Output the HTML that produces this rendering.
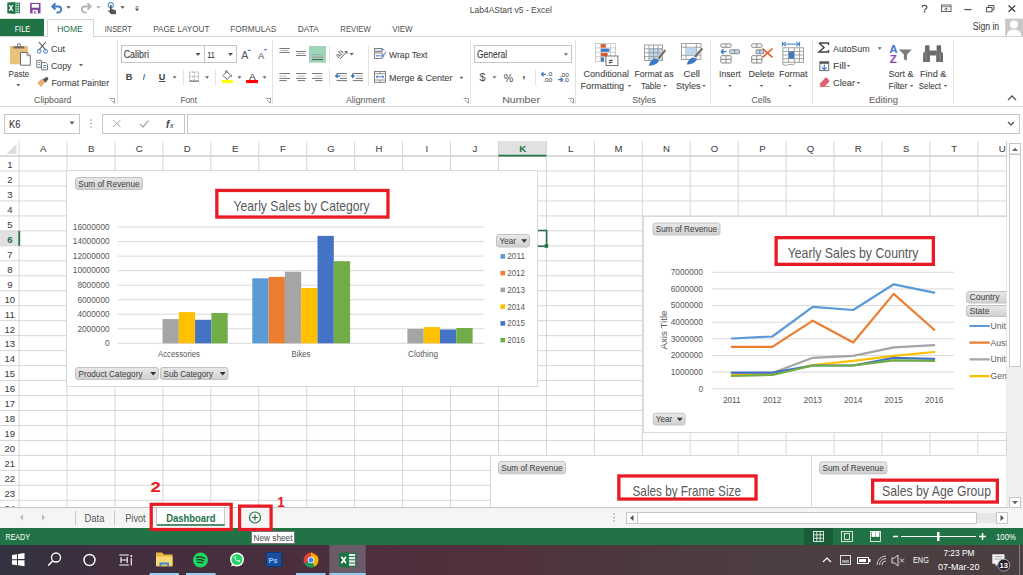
<!DOCTYPE html>
<html><head><meta charset="utf-8"><style>
html,body{margin:0;padding:0;width:1023px;height:575px;overflow:hidden;background:#fff}
svg{display:block}
text{font-family:"Liberation Sans", sans-serif}
</style></head><body>
<svg width="1023" height="575" viewBox="0 0 1023 575">
<rect x="0" y="0" width="1023" height="37" fill="#ffffff" />
<path d="M7.3,2.6 L15,2 L15,14 L7.3,13.2 Z" fill="#1e7145"/><rect x="15" y="3.1" width="4.6" height="9.7" fill="#dfeee5" stroke="#1e7145" stroke-width="0.9"/><path d="M15.5,5.4 h3.6 M15.5,7.8 h3.6 M15.5,10.2 h3.6 M17.2,3.3 v9.3" stroke="#1e7145" stroke-width="0.8"/><path d="M9.2,5 L12.8,10.8 M12.8,5 L9.2,10.8" stroke="#fff" stroke-width="1.3"/>
<rect x="30.1" y="2.9" width="10.4" height="10.5" fill="#8044a0"/><rect x="31.7" y="4" width="7.2" height="3.7" fill="#fff"/><rect x="32.6" y="9.9" width="5.2" height="3.5" fill="#fff"/><rect x="34.2" y="11" width="1.4" height="2.4" fill="#8044a0"/>
<path d="M55.5,3.3 L52.3,6.5 L55.5,9.7 M52.8,6.5 H58.2 a3,3 0 0 1 0,6 H56.5" fill="none" stroke="#3c78c3" stroke-width="1.9" stroke-linejoin="round"/>
<path d="M66.25,6.25 L70.75,6.25 L68.5,8.75 Z" fill="#555"/>
<path d="M87.5,3.3 L90.7,6.5 L87.5,9.7 M90.2,6.5 H84.8 a3,3 0 0 0 0,6 H86.5" fill="none" stroke="#b4b4b4" stroke-width="1.9" stroke-linejoin="round"/>
<path d="M96.25,6.25 L100.75,6.25 L98.5,8.75 Z" fill="#aaa"/>
<circle cx="110.8" cy="5.2" r="2.6" fill="none" stroke="#5b9bd5" stroke-width="1.1"/><path d="M110,5 h1.6 v4 l3.5,1 q0.9,0.3 0.9,1.2 v3 h-5 l-3,-3.5 l1,-0.8 l1,0.8 Z" fill="#555"/>
<path d="M120.25,6.25 L124.75,6.25 L122.5,8.75 Z" fill="#555"/>
<path d="M135.5,6.5 h3 M135.5,8 h3" stroke="#777" stroke-width="0.8"/>
<path d="M135.0,8.75 L139.0,8.75 L137,11.25 Z" fill="#555"/>
<text x="469.8" y="12.7" font-size="9.3" fill="#4a4a4a" textLength="82" lengthAdjust="spacingAndGlyphs" >Lab4AStart v5 - Excel</text>
<path d="M922.2,7.2 q0,-1.8 2.3,-1.8 q2.3,0 2.3,1.8 q0,1.2 -1.2,1.8 q-1,0.5 -1,1.6" fill="none" stroke="#555" stroke-width="1.3"/><rect x="923.8" y="11" width="1.5" height="1.4" fill="#555"/>
<rect x="941.5" y="5" width="9.5" height="6.5" fill="none" stroke="#666" stroke-width="1"/><path d="M941.5,6.7 h9.5" stroke="#666" stroke-width="0.8"/><path d="M944.2,9.8 L946.2,7.8 L948.2,9.8 M946.2,8 v3.5" fill="none" stroke="#666" stroke-width="0.9"/>
<line x1="964.3" y1="9.6" x2="971.5" y2="9.6" stroke="#555" stroke-width="1.3" />
<rect x="986.5" y="7.5" width="5.5" height="4.3" fill="none" stroke="#555"/><path d="M988.5,7.5 v-2 h5.5 v4.3 h-2" fill="none" stroke="#555"/>
<path d="M1008.5,5.5 L1015.2,11.8 M1015.2,5.5 L1008.5,11.8" stroke="#444" stroke-width="1.3"/>
<text x="972.7" y="30.2" font-size="10" fill="#444" stroke="#444" stroke-width="0.08" textLength="26.5" lengthAdjust="spacingAndGlyphs" >Sign in</text>
<rect x="1005.2" y="18.6" width="17.8" height="17.4" fill="#c8c8c8"/><circle cx="1014" cy="24.5" r="4" fill="#fff"/><path d="M1006.7,36 q0,-6.5 7.3,-6.5 q7.3,0 7.3,6.5 Z" fill="#fff"/>
<rect x="0" y="18.8" width="44" height="18.5" fill="#217346" />
<text x="14.7" y="31.6" font-size="9.7" fill="#ffffff" textLength="15.3" lengthAdjust="spacingAndGlyphs" >FILE</text>
<path d="M47.5,37 V19.5 H93.5 V37" fill="#fff" stroke="#d4d4d4" stroke-width="1"/>
<line x1="0" y1="36.5" x2="47.5" y2="36.5" stroke="#d4d4d4" stroke-width="1" />
<line x1="93.5" y1="36.5" x2="1023" y2="36.5" stroke="#d4d4d4" stroke-width="1" />
<text x="57.2" y="31.6" font-size="9.7" fill="#217346" textLength="25.6" lengthAdjust="spacingAndGlyphs" >HOME</text>
<text x="104.8" y="31.6" font-size="9.7" fill="#505050" textLength="26.9" lengthAdjust="spacingAndGlyphs" >INSERT</text>
<text x="153.2" y="31.6" font-size="9.7" fill="#505050" textLength="56.3" lengthAdjust="spacingAndGlyphs" >PAGE LAYOUT</text>
<text x="230.3" y="31.6" font-size="9.7" fill="#505050" textLength="46.1" lengthAdjust="spacingAndGlyphs" >FORMULAS</text>
<text x="297.8" y="31.6" font-size="9.7" fill="#505050" textLength="21.1" lengthAdjust="spacingAndGlyphs" >DATA</text>
<text x="340.3" y="31.6" font-size="9.7" fill="#505050" textLength="30.5" lengthAdjust="spacingAndGlyphs" >REVIEW</text>
<text x="392.2" y="31.6" font-size="9.7" fill="#505050" textLength="20.5" lengthAdjust="spacingAndGlyphs" >VIEW</text>
<rect x="0" y="37" width="1023" height="69" fill="#ffffff" />
<line x1="0" y1="106.5" x2="1023" y2="106.5" stroke="#d4d4d4" stroke-width="1" />
<line x1="117.5" y1="40" x2="117.5" y2="104" stroke="#e1e1e1" stroke-width="1" />
<line x1="272.5" y1="40" x2="272.5" y2="104" stroke="#e1e1e1" stroke-width="1" />
<line x1="470.5" y1="40" x2="470.5" y2="104" stroke="#e1e1e1" stroke-width="1" />
<line x1="575.5" y1="40" x2="575.5" y2="104" stroke="#e1e1e1" stroke-width="1" />
<line x1="710.5" y1="40" x2="710.5" y2="104" stroke="#e1e1e1" stroke-width="1" />
<line x1="812.5" y1="40" x2="812.5" y2="104" stroke="#e1e1e1" stroke-width="1" />
<line x1="953.5" y1="40" x2="953.5" y2="104" stroke="#e1e1e1" stroke-width="1" />
<text x="34.1" y="103" font-size="9.5" fill="#666" stroke="#666" stroke-width="0.08" textLength="37.3" lengthAdjust="spacingAndGlyphs" >Clipboard</text>
<text x="180.5" y="103" font-size="9.5" fill="#666" stroke="#666" stroke-width="0.08" textLength="16.5" lengthAdjust="spacingAndGlyphs" >Font</text>
<text x="346" y="103" font-size="9.5" fill="#666" stroke="#666" stroke-width="0.08" textLength="39" lengthAdjust="spacingAndGlyphs" >Alignment</text>
<text x="502.2" y="103" font-size="9.5" fill="#666" stroke="#666" stroke-width="0.08" textLength="37.8" lengthAdjust="spacingAndGlyphs" >Number</text>
<text x="632.2" y="103" font-size="9.5" fill="#666" stroke="#666" stroke-width="0.08" textLength="23.8" lengthAdjust="spacingAndGlyphs" >Styles</text>
<text x="751.5" y="103" font-size="9.5" fill="#666" stroke="#666" stroke-width="0.08" textLength="19.5" lengthAdjust="spacingAndGlyphs" >Cells</text>
<text x="869" y="103" font-size="9.5" fill="#666" stroke="#666" stroke-width="0.08" textLength="29" lengthAdjust="spacingAndGlyphs" >Editing</text>
<path d="M109.5,98.5 h5 v5 M111,100 l3,3" fill="none" stroke="#888" stroke-width="0.8"/>
<path d="M265.5,98.5 h5 v5 M267,100 l3,3" fill="none" stroke="#888" stroke-width="0.8"/>
<path d="M463.5,98.5 h5 v5 M465,100 l3,3" fill="none" stroke="#888" stroke-width="0.8"/>
<path d="M568.5,98.5 h5 v5 M570,100 l3,3" fill="none" stroke="#888" stroke-width="0.8"/>
<path d="M1008,100 L1012,96 L1016,100" fill="none" stroke="#555" stroke-width="1.3"/>
<rect x="9.9" y="46" width="18.1" height="18.3" fill="#e8c27a"/><rect x="13.5" y="46.3" width="10.8" height="2.2" fill="#6d6d6d"/><circle cx="18.9" cy="45.3" r="1.6" fill="none" stroke="#6d6d6d" stroke-width="1"/><path d="M20.5,52.4 h6.5 l3.3,3.3 v9.5 h-9.8 Z" fill="#fff" stroke="#6d6d6d" stroke-width="1"/><path d="M27,52.4 v3.3 h3.3" fill="none" stroke="#6d6d6d" stroke-width="0.8"/>
<text x="8.5" y="76.8" font-size="9.4" fill="#444" stroke="#444" stroke-width="0.08" textLength="20.7" lengthAdjust="spacingAndGlyphs" >Paste</text>
<path d="M16.3,84.05 L20.3,84.05 L18.3,86.55 Z" fill="#666"/>
<path d="M38.8,42 L45.8,50.2 M45.8,42 L38.8,50.2" stroke="#555" stroke-width="1.1"/><circle cx="39.2" cy="51.3" r="1.9" fill="none" stroke="#3c78c3" stroke-width="1"/><circle cx="45.6" cy="51.3" r="1.9" fill="none" stroke="#3c78c3" stroke-width="1"/>
<text x="51" y="51.7" font-size="9.4" fill="#444" stroke="#444" stroke-width="0.08" textLength="14" lengthAdjust="spacingAndGlyphs" >Cut</text>
<path d="M36.8,60.3 h4.5 v7 h-4.5 Z" fill="#fff" stroke="#666" stroke-width="0.9"/><path d="M38,62.5 h2 M38,64.5 h2" stroke="#3c78c3" stroke-width="0.8"/><path d="M41.5,62.5 h4 l2,2 v5.3 h-6 Z" fill="#fff" stroke="#666" stroke-width="0.9"/><path d="M43,65.5 h3.2 M43,67.5 h3.2" stroke="#3c78c3" stroke-width="0.8"/>
<text x="51" y="68.8" font-size="9.4" fill="#444" stroke="#444" stroke-width="0.08" textLength="20.4" lengthAdjust="spacingAndGlyphs" >Copy</text>
<path d="M79.0,64.05 L83.0,64.05 L81,66.55 Z" fill="#666"/>
<path d="M37.2,83 l4.8,-4.2 l3.3,3.3 l-4.2,4.8 Z" fill="#e8b070"/><path d="M42.6,79.6 l4.2,-2.8 l1.8,1.8 l-2.8,4.2 Z" fill="#555"/>
<text x="51.5" y="85.5" font-size="9.4" fill="#444" stroke="#444" stroke-width="0.08" textLength="57.6" lengthAdjust="spacingAndGlyphs" >Format Painter</text>
<rect x="121.5" y="45.5" width="115" height="17" fill="#fff" stroke="#c6c6c6" stroke-width="1" />
<line x1="204.5" y1="46" x2="204.5" y2="62" stroke="#c6c6c6" stroke-width="1" />
<text x="123.7" y="57.8" font-size="10" fill="#333" stroke="#333" stroke-width="0.08" textLength="25.2" lengthAdjust="spacingAndGlyphs" >Calibri</text>
<path d="M195.5,53.1 L200.5,53.1 L198,55.9 Z" fill="#555"/>
<text x="207.3" y="58" font-size="9.6" fill="#333" stroke="#333" stroke-width="0.08" textLength="7.6" lengthAdjust="spacingAndGlyphs" >11</text>
<path d="M228.0,53.1 L233.0,53.1 L230.5,55.9 Z" fill="#555"/>
<text x="241.2" y="58.5" font-size="10.2" fill="#555" stroke="#555" stroke-width="0.08" textLength="7" lengthAdjust="spacingAndGlyphs" >A</text>
<path d="M247.5,51 l1.7,-1.8 l1.7,1.8 Z" fill="#3c78c3"/>
<text x="258.3" y="58.5" font-size="8.5" fill="#555" stroke="#555" stroke-width="0.08" textLength="6" lengthAdjust="spacingAndGlyphs" >A</text>
<path d="M263.8,49 l1.7,1.8 l1.7,-1.8 Z" fill="#3c78c3"/>
<text x="125.7" y="80.2" font-size="9.3" fill="#444" stroke="#444" stroke-width="0.08" font-weight="bold" >B</text>
<text x="142.5" y="80.2" font-size="9.5" fill="#555" stroke="#555" stroke-width="0.08" font-style="italic" font-family="Liberation Serif">I</text>
<text x="158.8" y="80.2" font-size="9.0" fill="#444" stroke="#444" stroke-width="0.08" font-weight="bold" >U</text>
<line x1="158.9" y1="81.5" x2="165.4" y2="81.5" stroke="#444" stroke-width="1" />
<path d="M172.6,76.15 L176.6,76.15 L174.6,78.65 Z" fill="#666"/>
<line x1="183.5" y1="69" x2="183.5" y2="85" stroke="#e1e1e1" stroke-width="1" />
<g stroke="#888" stroke-width="0.9" stroke-dasharray="1.2,1.2" fill="none"><rect x="189.7" y="72" width="8.8" height="8.8"/><path d="M194.1,72 v8.8 M189.7,76.4 h8.8"/></g><line x1="189.2" y1="81.2" x2="198.9" y2="81.2" stroke="#666" stroke-width="1"/>
<path d="M205.0,76.15 L209.0,76.15 L207,78.65 Z" fill="#666"/>
<line x1="215.5" y1="69" x2="215.5" y2="85" stroke="#e1e1e1" stroke-width="1" />
<path d="M223,75.5 l3.8,-3.8 l4,4 l-3.8,3.8 Z" fill="#fff" stroke="#555" stroke-width="0.9"/><path d="M225.5,73 v-2 q1.5,-1 2.5,0.5" fill="none" stroke="#555" stroke-width="0.8"/><path d="M231,74.5 q1.8,1 0.8,3 q-1,-1 -0.8,-3 Z" fill="#3c78c3"/><rect x="221.9" y="80" width="11.1" height="3.1" fill="#ffff00"/>
<path d="M237.4,76.15 L241.4,76.15 L239.4,78.65 Z" fill="#666"/>
<text x="249" y="79.6" font-size="9.2" fill="#444" stroke="#444" stroke-width="0.08" textLength="6.8" lengthAdjust="spacingAndGlyphs" >A</text>
<rect x="246.1" y="80" width="11.9" height="3.1" fill="#ff0000" />
<path d="M262.6,76.15 L266.6,76.15 L264.6,78.65 Z" fill="#666"/>
<line x1="279.4" y1="48.5" x2="289.6" y2="48.5" stroke="#777" stroke-width="1" />
<line x1="280.5" y1="50.5" x2="288.5" y2="50.5" stroke="#aaa" stroke-width="1" />
<line x1="279.4" y1="52.5" x2="289.6" y2="52.5" stroke="#777" stroke-width="1" />
<line x1="296" y1="51.5" x2="306" y2="51.5" stroke="#777" stroke-width="1" />
<line x1="297" y1="53.5" x2="305" y2="53.5" stroke="#aaa" stroke-width="1" />
<line x1="296" y1="55.5" x2="306" y2="55.5" stroke="#777" stroke-width="1" />
<rect x="309" y="46" width="17" height="16.7" fill="#9fd5b7" />
<line x1="312" y1="54.7" x2="323" y2="54.7" stroke="#9ab" stroke-width="1" />
<line x1="312" y1="57.2" x2="323" y2="57.2" stroke="#a88" stroke-width="1" />
<line x1="312" y1="59.6" x2="323" y2="59.6" stroke="#555" stroke-width="1" />
<line x1="329.5" y1="46" x2="329.5" y2="61.5" stroke="#e1e1e1" stroke-width="1" />
<text x="0" y="0" font-size="7.5" fill="#555" transform="translate(338,58.5) rotate(-45)">ab</text><path d="M340,59 L347,51.5 M344.5,51.5 h2.5 v2.5" fill="none" stroke="#555" stroke-width="0.9"/>
<path d="M349.45,52.95 L353.95,52.95 L351.7,55.45 Z" fill="#666"/>
<line x1="368.5" y1="45" x2="368.5" y2="86" stroke="#e1e1e1" stroke-width="1" />
<line x1="279.4" y1="73.5" x2="289.9" y2="73.5" stroke="#777" stroke-width="1" />
<line x1="279.4" y1="78.4" x2="289.9" y2="78.4" stroke="#777" stroke-width="1" />
<line x1="279.4" y1="76" x2="286.7" y2="76" stroke="#bbb" stroke-width="1" />
<line x1="279.4" y1="80.6" x2="286.7" y2="80.6" stroke="#777" stroke-width="1" />
<line x1="296" y1="73.5" x2="306.5" y2="73.5" stroke="#777" stroke-width="1" />
<line x1="296" y1="78.4" x2="306.5" y2="78.4" stroke="#777" stroke-width="1" />
<line x1="297.5" y1="76" x2="305" y2="76" stroke="#bbb" stroke-width="1" />
<line x1="297.5" y1="80.6" x2="305" y2="80.6" stroke="#777" stroke-width="1" />
<line x1="312" y1="73.5" x2="322.5" y2="73.5" stroke="#777" stroke-width="1" />
<line x1="312" y1="78.4" x2="322.5" y2="78.4" stroke="#777" stroke-width="1" />
<line x1="315.2" y1="76" x2="322.5" y2="76" stroke="#bbb" stroke-width="1" />
<line x1="315.2" y1="80.6" x2="322.5" y2="80.6" stroke="#777" stroke-width="1" />
<line x1="329.5" y1="69" x2="329.5" y2="85" stroke="#e1e1e1" stroke-width="1" />
<path d="M334.6,76 l3,-2.5 v5 Z" fill="#2e75b6"/><path d="M337,76 h3" stroke="#2e75b6" stroke-width="1.4"/>
<line x1="336.5" y1="73.5" x2="347" y2="73.5" stroke="#777" stroke-width="1" />
<line x1="340" y1="76" x2="347" y2="76" stroke="#bbb" stroke-width="1" />
<line x1="340" y1="78.4" x2="347" y2="78.4" stroke="#777" stroke-width="1" />
<line x1="336.5" y1="80.6" x2="347" y2="80.6" stroke="#777" stroke-width="1" />
<path d="M355,76 l-3,-2.5 v5 Z" fill="#2e75b6"/><path d="M350.8,76 h3" stroke="#2e75b6" stroke-width="1.4"/>
<line x1="352.7" y1="73.5" x2="363" y2="73.5" stroke="#777" stroke-width="1" />
<line x1="356" y1="76" x2="363" y2="76" stroke="#bbb" stroke-width="1" />
<line x1="356" y1="78.4" x2="363" y2="78.4" stroke="#777" stroke-width="1" />
<line x1="352.7" y1="80.6" x2="363" y2="80.6" stroke="#777" stroke-width="1" />
<rect x="374.5" y="48.5" width="7.5" height="3" fill="#dbe8f5" stroke="#777" stroke-width="0.9"/><rect x="374.5" y="53" width="7.5" height="5.5" fill="#fff" stroke="#777" stroke-width="0.9"/><path d="M376,55.8 h4.5" stroke="#3c78c3"/><path d="M381.5,49.8 h3 M385.5,51.5 q0,3.5 -3,4.5 M381.8,56 l2,-1.8 M381.8,56 l2.2,1.2" fill="none" stroke="#3c78c3" stroke-width="0.9"/>
<text x="389" y="58" font-size="9.4" fill="#444" stroke="#444" stroke-width="0.08" textLength="38.5" lengthAdjust="spacingAndGlyphs" >Wrap Text</text>
<rect x="374.5" y="71.5" width="11" height="10.8" fill="#fff" stroke="#777" stroke-width="0.9"/><path d="M374.5,73.7 h11 M374.5,80 h11 M380,71.5 v2.2 M380,80 v2.3" stroke="#777" stroke-width="0.8"/><path d="M376.2,76.8 h7.6 M376.2,76.8 l1.6,-1.3 M376.2,76.8 l1.6,1.3 M383.8,76.8 l-1.6,-1.3 M383.8,76.8 l-1.6,1.3" fill="none" stroke="#3c78c3" stroke-width="0.9"/>
<text x="389" y="81" font-size="9.4" fill="#444" stroke="#444" stroke-width="0.08" textLength="63.5" lengthAdjust="spacingAndGlyphs" >Merge &amp; Center</text>
<path d="M459.5,76.75 L463.5,76.75 L461.5,79.25 Z" fill="#666"/>
<rect x="474.5" y="45.5" width="97" height="17" fill="#fff" stroke="#c6c6c6" stroke-width="1" />
<text x="477" y="58" font-size="10" fill="#333" stroke="#333" stroke-width="0.08" textLength="30" lengthAdjust="spacingAndGlyphs" >General</text>
<path d="M564.0,53.25 L568.0,53.25 L566,55.75 Z" fill="#666"/>
<text x="479.6" y="81.2" font-size="11" fill="#555" stroke="#555" stroke-width="0.08" textLength="6" lengthAdjust="spacingAndGlyphs" >$</text>
<path d="M492.5,76.25 L496.5,76.25 L494.5,78.75 Z" fill="#777"/>
<text x="503.7" y="81.6" font-size="10.5" fill="#555" stroke="#555" stroke-width="0.08" textLength="9.4" lengthAdjust="spacingAndGlyphs" >%</text>
<text x="522.2" y="78.4" font-size="11" fill="#555" stroke="#555" stroke-width="0.08" font-weight="bold" >,</text>
<line x1="535.5" y1="69" x2="535.5" y2="85" stroke="#e1e1e1" stroke-width="1" />
<path d="M541.3,74.3 h4.5 M541.3,74.3 l2.2,-2 M541.3,74.3 l2.2,2" stroke="#3c78c3" stroke-width="1.3" fill="none"/>
<text x="546.5" y="76" font-size="6.2" fill="#555" stroke="#555" stroke-width="0.08" textLength="5.7" lengthAdjust="spacingAndGlyphs" >.0</text>
<text x="543.3" y="81.6" font-size="6.2" fill="#555" stroke="#555" stroke-width="0.08" textLength="8.9" lengthAdjust="spacingAndGlyphs" >.00</text>
<text x="559.8" y="76.8" font-size="6.2" fill="#555" stroke="#555" stroke-width="0.08" textLength="9" lengthAdjust="spacingAndGlyphs" >.00</text>
<path d="M558,79.7 h4.8 M562.8,79.7 l-2.2,-2 M562.8,79.7 l-2.2,2" stroke="#3c78c3" stroke-width="1.3" fill="none"/>
<text x="563" y="81.6" font-size="6.2" fill="#555" stroke="#555" stroke-width="0.08" textLength="5.8" lengthAdjust="spacingAndGlyphs" >.0</text>
<g stroke="#c8c8c8" stroke-width="0.9" fill="none"><rect x="595.5" y="43.5" width="20" height="18" fill="#fff"/><path d="M600.5,43.5 v18 M605.5,43.5 v18 M610.5,43.5 v18 M595.5,47.9 h20 M595.5,52.3 h20 M595.5,56.7 h20"/></g><rect x="601" y="44.1" width="4.8" height="3.5" fill="#e0592a"/><rect x="601" y="48.6" width="8.4" height="3.2" fill="#3c78c3"/><rect x="601" y="52.9" width="6.6" height="3.5" fill="#e0592a"/><rect x="601" y="57.4" width="3" height="4.2" fill="#3c78c3"/><rect x="606" y="56" width="11.9" height="9.6" fill="#fff" stroke="#666" stroke-width="0.9"/><text x="608.6" y="63.6" font-size="8" fill="#333">≠</text>
<text x="583.5" y="76.9" font-size="9.4" fill="#444" stroke="#444" stroke-width="0.08" textLength="45.5" lengthAdjust="spacingAndGlyphs" >Conditional</text>
<text x="580.5" y="88.8" font-size="9.4" fill="#444" stroke="#444" stroke-width="0.08" textLength="43.6" lengthAdjust="spacingAndGlyphs" >Formatting</text>
<path d="M627.75,85.0 L631.25,85.0 L629.5,87.0 Z" fill="#666"/>
<rect x="649" y="48.5" width="13" height="11.5" fill="#bdd7ee"/><g stroke="#999" stroke-width="0.9" fill="none"><rect x="644.5" y="45" width="18" height="15.5"/><path d="M649,45 v15.5 M653.5,45 v15.5 M658,45 v15.5 M644.5,48.8 h18 M644.5,52.7 h18 M644.5,56.6 h18"/></g><path d="M657,58 L664.5,49 L666.3,50.8 L659.5,59.8 Z" fill="#6d6d6d" stroke="#fff" stroke-width="0.6"/><path d="M648.7,65.8 Q650,60.5 654.5,58.6 Q658.5,58.6 658.8,61.5 Q655,65.8 648.7,65.8 Z" fill="#3c78c3"/>
<text x="634.5" y="76.9" font-size="9.4" fill="#444" stroke="#444" stroke-width="0.08" textLength="39" lengthAdjust="spacingAndGlyphs" >Format as</text>
<text x="641" y="88.8" font-size="9.4" fill="#444" stroke="#444" stroke-width="0.08" textLength="20" lengthAdjust="spacingAndGlyphs" >Table</text>
<path d="M663.25,85.0 L666.75,85.0 L665,87.0 Z" fill="#666"/>
<g stroke="#999" stroke-width="0.9" fill="none"><rect x="681.5" y="43.5" width="19.4" height="16" fill="#fff"/><path d="M686,43.5 v16 M696.3,43.5 v16 M681.5,47.3 h19.4 M681.5,55.3 h19.4"/></g><rect x="686.4" y="47.6" width="9.6" height="7.4" fill="#bdd7ee"/><path d="M693.5,56.3 L701.5,47.3 L703.4,49.1 L696,58 Z" fill="#6d6d6d" stroke="#fff" stroke-width="0.6"/><path d="M686.8,64.6 Q688,59.5 692.3,57.4 Q696.3,57.4 696.6,60.2 Q693,64.6 686.8,64.6 Z" fill="#3c78c3"/>
<text x="683.5" y="76.9" font-size="9.4" fill="#444" stroke="#444" stroke-width="0.08" textLength="16.5" lengthAdjust="spacingAndGlyphs" >Cell</text>
<text x="676" y="88.8" font-size="9.4" fill="#444" stroke="#444" stroke-width="0.08" textLength="24.5" lengthAdjust="spacingAndGlyphs" >Styles</text>
<path d="M702.25,85.0 L705.75,85.0 L704,87.0 Z" fill="#666"/>
<rect x="720.9" y="43.9" width="10.200000000000045" height="3.3999999999999986" rx="0.8" fill="#fff" stroke="#888" stroke-width="1"/><line x1="726.0" y1="43.9" x2="726.0" y2="47.3" stroke="#888"/><rect x="729.7" y="49.8" width="9.699999999999932" height="3.9000000000000057" rx="0.8" fill="#bdd7ee" stroke="#888" stroke-width="1"/><line x1="734.55" y1="49.8" x2="734.55" y2="53.7" stroke="#888"/><rect x="720.9" y="55.7" width="10.200000000000045" height="7.299999999999997" rx="0.8" fill="#fff" stroke="#888" stroke-width="1"/><path d="M726.0,55.7 V63 M720.9,59.35 H731.1" stroke="#888"/><path d="M721,51.6 h5.5 M721,51.6 l2.6,-2.4 M721,51.6 l2.6,2.4" fill="none" stroke="#3c78c3" stroke-width="1.4"/>
<text x="719" y="76.9" font-size="9.4" fill="#444" stroke="#444" stroke-width="0.08" textLength="21.7" lengthAdjust="spacingAndGlyphs" >Insert</text>
<path d="M728.25,85.0 L731.75,85.0 L730,87.0 Z" fill="#666"/>
<rect x="751.7" y="43.9" width="10.199999999999932" height="3.3999999999999986" rx="0.8" fill="#fff" stroke="#888" stroke-width="1"/><line x1="756.8" y1="43.9" x2="756.8" y2="47.3" stroke="#888"/><rect x="756" y="49.8" width="7.5" height="3.9000000000000057" rx="0.8" fill="#bdd7ee" stroke="#888" stroke-width="1"/><line x1="759.75" y1="49.8" x2="759.75" y2="53.7" stroke="#888"/><rect x="751.7" y="55.7" width="10.199999999999932" height="7.299999999999997" rx="0.8" fill="#fff" stroke="#888" stroke-width="1"/><path d="M756.8,55.7 V63 M751.7,59.35 H761.9" stroke="#888"/><path d="M762.6,48.5 L772.5,57.4 M772.5,48.5 L762.6,57.4" stroke="#e0592a" stroke-width="1.6"/>
<text x="748.5" y="76.9" font-size="9.4" fill="#444" stroke="#444" stroke-width="0.08" textLength="26" lengthAdjust="spacingAndGlyphs" >Delete</text>
<path d="M759.75,85.0 L763.25,85.0 L761.5,87.0 Z" fill="#666"/>
<path d="M783,44.1 h16 M783,44.1 l3,-2.2 M783,44.1 l3,2.2 M799,44.1 l-3,-2.2 M799,44.1 l-3,2.2 M782.4,42 v4.5 M799.6,42 v4.5" stroke="#3c78c3" fill="none" stroke-width="1"/><g stroke="#999" stroke-width="0.9" fill="none"><rect x="782.9" y="47.8" width="20.6" height="14.5" fill="#fff"/><path d="M788.5,47.8 v14.5 M794.3,47.8 v14.5 M799.5,47.8 v14.5 M782.9,51.4 h20.6 M782.9,55 h20.6 M782.9,58.7 h20.6"/><path d="M782.9,62.3 v2.5 q4,1.5 6,-0.5 q4,1.5 6,-0.5 v-2"/></g><rect x="788.8" y="51.5" width="5.2" height="7.1" fill="#3c78c3"/>
<text x="779" y="76.9" font-size="9.4" fill="#444" stroke="#444" stroke-width="0.08" textLength="28.6" lengthAdjust="spacingAndGlyphs" >Format</text>
<path d="M788.25,85.0 L791.75,85.0 L790,87.0 Z" fill="#666"/>
<path d="M819,43 h9.5 v2 M819,43 l5,4.5 l-5,4.5 h9.5 v-2" fill="none" stroke="#444" stroke-width="1.5"/>
<text x="833" y="52" font-size="9.4" fill="#444" stroke="#444" stroke-width="0.08" textLength="36.7" lengthAdjust="spacingAndGlyphs" >AutoSum</text>
<path d="M877.7,47.25 L881.7,47.25 L879.7,49.75 Z" fill="#666"/>
<rect x="819.9" y="61.8" width="8.8" height="8.8" fill="#fff" stroke="#666"/><rect x="819.9" y="61.8" width="8.8" height="2" fill="#555"/><path d="M824.3,64.5 v5 M822,67.3 l2.3,2.3 l2.3,-2.3" stroke="#3c78c3" fill="none" stroke-width="1.1"/>
<text x="833" y="68.7" font-size="9.4" fill="#444" stroke="#444" stroke-width="0.08" textLength="13" lengthAdjust="spacingAndGlyphs" >Fill</text>
<path d="M846.75,65.0 L850.25,65.0 L848.5,67.0 Z" fill="#666"/>
<path d="M819.5,84 l5.5,-6 q1,-1 2,0 l2,2 q1,1 0,2 l-4.5,4.5 h-3.5 Z" fill="#e06070"/><path d="M819.5,86.5 h10" stroke="#e06070" stroke-width="0.8"/>
<text x="833" y="85.8" font-size="9.4" fill="#444" stroke="#444" stroke-width="0.08" textLength="22" lengthAdjust="spacingAndGlyphs" >Clear</text>
<path d="M856.75,82.0 L860.25,82.0 L858.5,84.0 Z" fill="#666"/>
<text x="889.4" y="52.5" font-size="10.5" fill="#3c78c3" stroke="#3c78c3" stroke-width="0.08" font-weight="bold" textLength="8" lengthAdjust="spacingAndGlyphs" >A</text>
<text x="889.8" y="63.3" font-size="10.5" fill="#8e44ad" stroke="#8e44ad" stroke-width="0.08" font-weight="bold" textLength="7" lengthAdjust="spacingAndGlyphs" >Z</text>
<path d="M898.8,49.6 h13.1 l-5,5 v5.8 l-3,-1.2 v-4.6 Z" fill="#7a7a7a"/>
<text x="888.6" y="76.9" font-size="9.4" fill="#444" stroke="#444" stroke-width="0.08" textLength="25" lengthAdjust="spacingAndGlyphs" >Sort &amp;</text>
<text x="888.6" y="88.8" font-size="9.4" fill="#444" stroke="#444" stroke-width="0.08" textLength="18.8" lengthAdjust="spacingAndGlyphs" >Filter</text>
<path d="M909.95,85.0 L913.45,85.0 L911.7,87.0 Z" fill="#666"/>
<g fill="#6a6a6a"><rect x="925" y="45.2" width="4.5" height="7" rx="0.8"/><rect x="936.6" y="45.2" width="4.5" height="7" rx="0.8"/><path d="M923.1,61.9 v-8 q0,-2 2,-2.5 h4.8 v10.5 Z"/><path d="M943,61.9 v-8 q0,-2 -2,-2.5 h-4.8 v10.5 Z"/><rect x="929.5" y="50.5" width="7" height="5"/></g><path d="M926,52 v9 M940,52 v9" stroke="#999" stroke-width="0.8"/>
<text x="919.9" y="76.9" font-size="9.4" fill="#444" stroke="#444" stroke-width="0.08" textLength="26.6" lengthAdjust="spacingAndGlyphs" >Find &amp;</text>
<text x="918.7" y="88.8" font-size="9.4" fill="#444" stroke="#444" stroke-width="0.08" textLength="22.3" lengthAdjust="spacingAndGlyphs" >Select</text>
<path d="M943.75,85.0 L947.25,85.0 L945.5,87.0 Z" fill="#666"/>
<rect x="0" y="107" width="1023" height="34" fill="#ffffff" />
<rect x="4.5" y="114.5" width="75" height="19" fill="#fff" stroke="#c6c6c6" stroke-width="1" />
<text x="9.1" y="128" font-size="10" fill="#333" stroke="#333" stroke-width="0.08" textLength="11.3" lengthAdjust="spacingAndGlyphs" >K6</text>
<path d="M69.5,121.5 L74.5,121.5 L72,124.5 Z" fill="#555"/>
<circle cx="91" cy="120" r="0.7" fill="#888"/><circle cx="91" cy="123.5" r="0.7" fill="#888"/><circle cx="91" cy="127" r="0.7" fill="#888"/>
<rect x="102.5" y="114.5" width="82" height="19" fill="#fff" stroke="#c6c6c6" stroke-width="1" />
<path d="M113,120 l7.5,7 M120.5,120 l-7.5,7" stroke="#aaa" stroke-width="1"/>
<path d="M140,124 l3,3 l5.5,-6.5" fill="none" stroke="#aaa" stroke-width="1.2"/>
<text x="166" y="127.5" font-size="10" fill="#444" stroke="#444" stroke-width="0.08" font-style="italic" font-family="Liberation Serif" font-weight="bold">f</text>
<text x="170" y="128" font-size="7" fill="#444" stroke="#444" stroke-width="0.08" font-style="italic" font-family="Liberation Serif">x</text>
<rect x="187.5" y="114.5" width="832" height="19" fill="#fff" stroke="#c6c6c6" stroke-width="1" />
<path d="M1008,122 l3,3 l3,-3" fill="none" stroke="#555" stroke-width="1.3"/>
<rect x="0" y="141" width="1008" height="367" fill="#ffffff" />
<rect x="498.45" y="141" width="47.94" height="15.030000000000001" fill="#e1e1e1" />
<rect x="0" y="230.88" width="19.05" height="14.97" fill="#e1e1e1" />
<path d="M16.5,144 v10 h-10 Z" fill="#dcdcdc"/>
<line x1="19.05" y1="141" x2="19.05" y2="508" stroke="#d6d6d6" stroke-width="1" />
<line x1="66.99" y1="141" x2="66.99" y2="508" stroke="#d6d6d6" stroke-width="1" />
<line x1="114.93" y1="141" x2="114.93" y2="508" stroke="#d6d6d6" stroke-width="1" />
<line x1="162.87" y1="141" x2="162.87" y2="508" stroke="#d6d6d6" stroke-width="1" />
<line x1="210.81" y1="141" x2="210.81" y2="508" stroke="#d6d6d6" stroke-width="1" />
<line x1="258.75" y1="141" x2="258.75" y2="508" stroke="#d6d6d6" stroke-width="1" />
<line x1="306.69" y1="141" x2="306.69" y2="508" stroke="#d6d6d6" stroke-width="1" />
<line x1="354.63" y1="141" x2="354.63" y2="508" stroke="#d6d6d6" stroke-width="1" />
<line x1="402.57" y1="141" x2="402.57" y2="508" stroke="#d6d6d6" stroke-width="1" />
<line x1="450.51" y1="141" x2="450.51" y2="508" stroke="#d6d6d6" stroke-width="1" />
<line x1="498.45" y1="141" x2="498.45" y2="508" stroke="#d6d6d6" stroke-width="1" />
<line x1="546.39" y1="141" x2="546.39" y2="508" stroke="#d6d6d6" stroke-width="1" />
<line x1="594.33" y1="141" x2="594.33" y2="508" stroke="#d6d6d6" stroke-width="1" />
<line x1="642.27" y1="141" x2="642.27" y2="508" stroke="#d6d6d6" stroke-width="1" />
<line x1="690.21" y1="141" x2="690.21" y2="508" stroke="#d6d6d6" stroke-width="1" />
<line x1="738.15" y1="141" x2="738.15" y2="508" stroke="#d6d6d6" stroke-width="1" />
<line x1="786.09" y1="141" x2="786.09" y2="508" stroke="#d6d6d6" stroke-width="1" />
<line x1="834.03" y1="141" x2="834.03" y2="508" stroke="#d6d6d6" stroke-width="1" />
<line x1="881.97" y1="141" x2="881.97" y2="508" stroke="#d6d6d6" stroke-width="1" />
<line x1="929.91" y1="141" x2="929.91" y2="508" stroke="#d6d6d6" stroke-width="1" />
<line x1="977.85" y1="141" x2="977.85" y2="508" stroke="#d6d6d6" stroke-width="1" />
<line x1="0" y1="156.03" x2="1008" y2="156.03" stroke="#cfcfcf" stroke-width="1.5" />
<line x1="0" y1="171.0" x2="1008" y2="171.0" stroke="#d6d6d6" stroke-width="1" />
<line x1="0" y1="185.97" x2="1008" y2="185.97" stroke="#d6d6d6" stroke-width="1" />
<line x1="0" y1="200.94" x2="1008" y2="200.94" stroke="#d6d6d6" stroke-width="1" />
<line x1="0" y1="215.91" x2="1008" y2="215.91" stroke="#d6d6d6" stroke-width="1" />
<line x1="0" y1="230.88" x2="1008" y2="230.88" stroke="#d6d6d6" stroke-width="1" />
<line x1="0" y1="245.85" x2="1008" y2="245.85" stroke="#d6d6d6" stroke-width="1" />
<line x1="0" y1="260.82" x2="1008" y2="260.82" stroke="#d6d6d6" stroke-width="1" />
<line x1="0" y1="275.79" x2="1008" y2="275.79" stroke="#d6d6d6" stroke-width="1" />
<line x1="0" y1="290.76" x2="1008" y2="290.76" stroke="#d6d6d6" stroke-width="1" />
<line x1="0" y1="305.73" x2="1008" y2="305.73" stroke="#d6d6d6" stroke-width="1" />
<line x1="0" y1="320.7" x2="1008" y2="320.7" stroke="#d6d6d6" stroke-width="1" />
<line x1="0" y1="335.67" x2="1008" y2="335.67" stroke="#d6d6d6" stroke-width="1" />
<line x1="0" y1="350.64" x2="1008" y2="350.64" stroke="#d6d6d6" stroke-width="1" />
<line x1="0" y1="365.61" x2="1008" y2="365.61" stroke="#d6d6d6" stroke-width="1" />
<line x1="0" y1="380.58" x2="1008" y2="380.58" stroke="#d6d6d6" stroke-width="1" />
<line x1="0" y1="395.55" x2="1008" y2="395.55" stroke="#d6d6d6" stroke-width="1" />
<line x1="0" y1="410.52" x2="1008" y2="410.52" stroke="#d6d6d6" stroke-width="1" />
<line x1="0" y1="425.49" x2="1008" y2="425.49" stroke="#d6d6d6" stroke-width="1" />
<line x1="0" y1="440.46" x2="1008" y2="440.46" stroke="#d6d6d6" stroke-width="1" />
<line x1="0" y1="455.43" x2="1008" y2="455.43" stroke="#d6d6d6" stroke-width="1" />
<line x1="0" y1="470.4" x2="1008" y2="470.4" stroke="#d6d6d6" stroke-width="1" />
<line x1="0" y1="485.37" x2="1008" y2="485.37" stroke="#d6d6d6" stroke-width="1" />
<line x1="0" y1="500.34" x2="1008" y2="500.34" stroke="#d6d6d6" stroke-width="1" />
<line x1="498.45" y1="155.6" x2="546.3899999999999" y2="155.6" stroke="#217346" stroke-width="1.8" />
<line x1="19.25" y1="230.88" x2="19.25" y2="245.85000000000002" stroke="#217346" stroke-width="1.8" />
<text x="43.32" y="151.9" font-size="9.6" fill="#444" stroke="#444" stroke-width="0.08" text-anchor="middle" >A</text>
<text x="91.26" y="151.9" font-size="9.6" fill="#444" stroke="#444" stroke-width="0.08" text-anchor="middle" >B</text>
<text x="139.2" y="151.9" font-size="9.6" fill="#444" stroke="#444" stroke-width="0.08" text-anchor="middle" >C</text>
<text x="187.14" y="151.9" font-size="9.6" fill="#444" stroke="#444" stroke-width="0.08" text-anchor="middle" >D</text>
<text x="235.08" y="151.9" font-size="9.6" fill="#444" stroke="#444" stroke-width="0.08" text-anchor="middle" >E</text>
<text x="283.02" y="151.9" font-size="9.6" fill="#444" stroke="#444" stroke-width="0.08" text-anchor="middle" >F</text>
<text x="330.96" y="151.9" font-size="9.6" fill="#444" stroke="#444" stroke-width="0.08" text-anchor="middle" >G</text>
<text x="378.9" y="151.9" font-size="9.6" fill="#444" stroke="#444" stroke-width="0.08" text-anchor="middle" >H</text>
<text x="426.84" y="151.9" font-size="9.6" fill="#444" stroke="#444" stroke-width="0.08" text-anchor="middle" >I</text>
<text x="474.78" y="151.9" font-size="9.6" fill="#444" stroke="#444" stroke-width="0.08" text-anchor="middle" >J</text>
<text x="522.72" y="151.9" font-size="9.6" fill="#217346" stroke="#217346" stroke-width="0.08" text-anchor="middle" font-weight="bold" >K</text>
<text x="570.66" y="151.9" font-size="9.6" fill="#444" stroke="#444" stroke-width="0.08" text-anchor="middle" >L</text>
<text x="618.6" y="151.9" font-size="9.6" fill="#444" stroke="#444" stroke-width="0.08" text-anchor="middle" >M</text>
<text x="666.54" y="151.9" font-size="9.6" fill="#444" stroke="#444" stroke-width="0.08" text-anchor="middle" >N</text>
<text x="714.48" y="151.9" font-size="9.6" fill="#444" stroke="#444" stroke-width="0.08" text-anchor="middle" >O</text>
<text x="762.42" y="151.9" font-size="9.6" fill="#444" stroke="#444" stroke-width="0.08" text-anchor="middle" >P</text>
<text x="810.36" y="151.9" font-size="9.6" fill="#444" stroke="#444" stroke-width="0.08" text-anchor="middle" >Q</text>
<text x="858.3" y="151.9" font-size="9.6" fill="#444" stroke="#444" stroke-width="0.08" text-anchor="middle" >R</text>
<text x="906.24" y="151.9" font-size="9.6" fill="#444" stroke="#444" stroke-width="0.08" text-anchor="middle" >S</text>
<text x="954.18" y="151.9" font-size="9.6" fill="#444" stroke="#444" stroke-width="0.08" text-anchor="middle" >T</text>
<text x="1002.12" y="151.9" font-size="9.6" fill="#444" stroke="#444" stroke-width="0.08" text-anchor="middle" >U</text>
<text x="9.8" y="167.83" font-size="9.5" fill="#444" stroke="#444" stroke-width="0.08" text-anchor="middle" >1</text>
<text x="9.8" y="182.8" font-size="9.5" fill="#444" stroke="#444" stroke-width="0.08" text-anchor="middle" >2</text>
<text x="9.8" y="197.77" font-size="9.5" fill="#444" stroke="#444" stroke-width="0.08" text-anchor="middle" >3</text>
<text x="9.8" y="212.74" font-size="9.5" fill="#444" stroke="#444" stroke-width="0.08" text-anchor="middle" >4</text>
<text x="9.8" y="227.71" font-size="9.5" fill="#444" stroke="#444" stroke-width="0.08" text-anchor="middle" >5</text>
<text x="9.8" y="242.68" font-size="9.5" fill="#217346" stroke="#217346" stroke-width="0.08" text-anchor="middle" font-weight="bold" >6</text>
<text x="9.8" y="257.65" font-size="9.5" fill="#444" stroke="#444" stroke-width="0.08" text-anchor="middle" >7</text>
<text x="9.8" y="272.62" font-size="9.5" fill="#444" stroke="#444" stroke-width="0.08" text-anchor="middle" >8</text>
<text x="9.8" y="287.59" font-size="9.5" fill="#444" stroke="#444" stroke-width="0.08" text-anchor="middle" >9</text>
<text x="9.8" y="302.56" font-size="9.5" fill="#444" stroke="#444" stroke-width="0.08" text-anchor="middle" >10</text>
<text x="9.8" y="317.53" font-size="9.5" fill="#444" stroke="#444" stroke-width="0.08" text-anchor="middle" >11</text>
<text x="9.8" y="332.5" font-size="9.5" fill="#444" stroke="#444" stroke-width="0.08" text-anchor="middle" >12</text>
<text x="9.8" y="347.47" font-size="9.5" fill="#444" stroke="#444" stroke-width="0.08" text-anchor="middle" >13</text>
<text x="9.8" y="362.44" font-size="9.5" fill="#444" stroke="#444" stroke-width="0.08" text-anchor="middle" >14</text>
<text x="9.8" y="377.41" font-size="9.5" fill="#444" stroke="#444" stroke-width="0.08" text-anchor="middle" >15</text>
<text x="9.8" y="392.38" font-size="9.5" fill="#444" stroke="#444" stroke-width="0.08" text-anchor="middle" >16</text>
<text x="9.8" y="407.35" font-size="9.5" fill="#444" stroke="#444" stroke-width="0.08" text-anchor="middle" >17</text>
<text x="9.8" y="422.32" font-size="9.5" fill="#444" stroke="#444" stroke-width="0.08" text-anchor="middle" >18</text>
<text x="9.8" y="437.29" font-size="9.5" fill="#444" stroke="#444" stroke-width="0.08" text-anchor="middle" >19</text>
<text x="9.8" y="452.26" font-size="9.5" fill="#444" stroke="#444" stroke-width="0.08" text-anchor="middle" >20</text>
<text x="9.8" y="467.23" font-size="9.5" fill="#444" stroke="#444" stroke-width="0.08" text-anchor="middle" >21</text>
<text x="9.8" y="482.2" font-size="9.5" fill="#444" stroke="#444" stroke-width="0.08" text-anchor="middle" >22</text>
<text x="9.8" y="497.17" font-size="9.5" fill="#444" stroke="#444" stroke-width="0.08" text-anchor="middle" >23</text>
<text x="9.8" y="512.14" font-size="9.5" fill="#444" stroke="#444" stroke-width="0.08" text-anchor="middle" >24</text>
<rect x="498.5" y="230.5" width="48.1" height="15.8" fill="none" stroke="#217346" stroke-width="1.6"/><rect x="544.6" y="244.2" width="3.6" height="3.6" fill="#217346"/>
<rect x="1007" y="141" width="16" height="367" fill="#f0f0f0" />
<rect x="1007" y="141" width="16" height="226" fill="#ffffff" />
<line x1="1006.5" y1="141" x2="1006.5" y2="508" stroke="#d4d4d4" stroke-width="1" />
<rect x="1009.5" y="143.5" width="11" height="10.5" fill="#fff" stroke="#c6c6c6" stroke-width="1" />
<path d="M1012,151 l3,-3.2 l3,3.2 Z" fill="#666"/>
<rect x="1009.5" y="154.5" width="11" height="212" fill="#fff" stroke="#c6c6c6" stroke-width="1" />
<rect x="1009.5" y="497.5" width="11" height="10" fill="#fff" stroke="#c6c6c6" stroke-width="1" />
<path d="M1012,501 l3,3.2 l3,-3.2 Z" fill="#666"/>
<defs><clipPath id="shc"><rect x="0" y="141" width="1006.5" height="366.5"/></clipPath></defs><g clip-path="url(#shc)"><defs><linearGradient id="pbg" x1="0" x2="0" y1="0" y2="1"><stop offset="0" stop-color="#e9e9e9"/><stop offset="1" stop-color="#d0d0d0"/></linearGradient></defs>
<rect x="66.5" y="170.5" width="471" height="216" fill="#fff" stroke="#d9d9d9" stroke-width="1"/>
<rect x="75.5" y="177.5" width="67" height="12" rx="2.5" fill="url(#pbg)" stroke="#c2c2c2" stroke-width="1"/>
<text x="78.2" y="186.8" font-size="8.8" fill="#404040" textLength="61.4" lengthAdjust="spacingAndGlyphs" >Sum of Revenue</text>
<rect x="216.85" y="190.45000000000002" width="171.10000000000002" height="26.599999999999977" fill="none" stroke="#e81c24" stroke-width="3.3"/>
<text x="233.6" y="211.3" font-size="14.2" fill="#595959" textLength="136.1" lengthAdjust="spacingAndGlyphs" >Yearly Sales by Category</text>
<line x1="117.5" y1="343.30" x2="484" y2="343.30" stroke="#d9d9d9" stroke-width="1"/>
<text x="109.7" y="346.1" font-size="8.3" fill="#595959" text-anchor="end" >0</text>
<line x1="117.5" y1="328.77" x2="484" y2="328.77" stroke="#d9d9d9" stroke-width="1"/>
<text x="109.7" y="331.57000000000005" font-size="8.3" fill="#595959" text-anchor="end" >2000000</text>
<line x1="117.5" y1="314.24" x2="484" y2="314.24" stroke="#d9d9d9" stroke-width="1"/>
<text x="109.7" y="317.04" font-size="8.3" fill="#595959" text-anchor="end" >4000000</text>
<line x1="117.5" y1="299.71" x2="484" y2="299.71" stroke="#d9d9d9" stroke-width="1"/>
<text x="109.7" y="302.51000000000005" font-size="8.3" fill="#595959" text-anchor="end" >6000000</text>
<line x1="117.5" y1="285.18" x2="484" y2="285.18" stroke="#d9d9d9" stroke-width="1"/>
<text x="109.7" y="287.98" font-size="8.3" fill="#595959" text-anchor="end" >8000000</text>
<line x1="117.5" y1="270.65" x2="484" y2="270.65" stroke="#d9d9d9" stroke-width="1"/>
<text x="109.7" y="273.45000000000005" font-size="8.3" fill="#595959" text-anchor="end" >10000000</text>
<line x1="117.5" y1="256.12" x2="484" y2="256.12" stroke="#d9d9d9" stroke-width="1"/>
<text x="109.7" y="258.92" font-size="8.3" fill="#595959" text-anchor="end" >12000000</text>
<line x1="117.5" y1="241.59" x2="484" y2="241.59" stroke="#d9d9d9" stroke-width="1"/>
<text x="109.7" y="244.39000000000004" font-size="8.3" fill="#595959" text-anchor="end" >14000000</text>
<line x1="117.5" y1="227.06" x2="484" y2="227.06" stroke="#d9d9d9" stroke-width="1"/>
<text x="109.7" y="229.86" font-size="8.3" fill="#595959" text-anchor="end" >16000000</text>
<rect x="162.50" y="319.10" width="16.30" height="24.20" fill="#a5a5a5"/>
<rect x="178.80" y="312.10" width="16.30" height="31.20" fill="#ffc000"/>
<rect x="195.10" y="319.80" width="16.30" height="23.50" fill="#4472c4"/>
<rect x="211.40" y="313.00" width="16.30" height="30.30" fill="#70ad47"/>
<rect x="252.30" y="278.30" width="16.30" height="65.00" fill="#5b9bd5"/>
<rect x="268.60" y="276.90" width="16.30" height="66.40" fill="#ed7d31"/>
<rect x="284.90" y="271.70" width="16.30" height="71.60" fill="#a5a5a5"/>
<rect x="301.20" y="288.00" width="16.30" height="55.30" fill="#ffc000"/>
<rect x="317.50" y="235.90" width="16.30" height="107.40" fill="#4472c4"/>
<rect x="333.80" y="261.20" width="16.30" height="82.10" fill="#70ad47"/>
<rect x="407.40" y="328.90" width="16.30" height="14.40" fill="#a5a5a5"/>
<rect x="423.70" y="327.10" width="16.30" height="16.20" fill="#ffc000"/>
<rect x="440.00" y="329.50" width="16.30" height="13.80" fill="#4472c4"/>
<rect x="456.30" y="328.00" width="16.30" height="15.30" fill="#70ad47"/>
<text x="179" y="357" font-size="8.5" fill="#595959" text-anchor="middle" textLength="42" lengthAdjust="spacingAndGlyphs" >Accessories</text>
<text x="301" y="357" font-size="8.5" fill="#595959" text-anchor="middle" textLength="19" lengthAdjust="spacingAndGlyphs" >Bikes</text>
<text x="423" y="357" font-size="8.5" fill="#595959" text-anchor="middle" textLength="30" lengthAdjust="spacingAndGlyphs" >Clothing</text>
<rect x="75.5" y="367.5" width="83" height="12" rx="2.5" fill="url(#pbg)" stroke="#c2c2c2" stroke-width="1"/>
<text x="78.5" y="376.8" font-size="8.8" fill="#404040" textLength="64" lengthAdjust="spacingAndGlyphs" >Product Category</text>
<path d="M150.2,372.0 h6 l-3,3.5 Z" fill="#333"/>
<rect x="160.5" y="367.5" width="67.5" height="12" rx="2.5" fill="url(#pbg)" stroke="#c2c2c2" stroke-width="1"/>
<text x="163.5" y="376.8" font-size="8.8" fill="#404040" textLength="49.5" lengthAdjust="spacingAndGlyphs" >Sub Category</text>
<path d="M219.7,372.0 h6 l-3,3.5 Z" fill="#333"/>
<rect x="496.5" y="234.5" width="33" height="12.5" rx="2.5" fill="url(#pbg)" stroke="#c2c2c2" stroke-width="1"/>
<text x="499.5" y="244.3" font-size="8.8" fill="#404040" textLength="16.5" lengthAdjust="spacingAndGlyphs" >Year</text>
<path d="M521.2,239.25 h6 l-3,3.5 Z" fill="#333"/>
<rect x="500.5" y="254.10" width="4.6" height="4.6" fill="#5b9bd5"/>
<text x="507.2" y="259.4" font-size="8.6" fill="#595959" textLength="17.8" lengthAdjust="spacingAndGlyphs" >2011</text>
<rect x="500.5" y="270.85" width="4.6" height="4.6" fill="#ed7d31"/>
<text x="507.2" y="276.15" font-size="8.6" fill="#595959" textLength="17.8" lengthAdjust="spacingAndGlyphs" >2012</text>
<rect x="500.5" y="287.60" width="4.6" height="4.6" fill="#a5a5a5"/>
<text x="507.2" y="292.9" font-size="8.6" fill="#595959" textLength="17.8" lengthAdjust="spacingAndGlyphs" >2013</text>
<rect x="500.5" y="304.35" width="4.6" height="4.6" fill="#ffc000"/>
<text x="507.2" y="309.65" font-size="8.6" fill="#595959" textLength="17.8" lengthAdjust="spacingAndGlyphs" >2014</text>
<rect x="500.5" y="321.10" width="4.6" height="4.6" fill="#4472c4"/>
<text x="507.2" y="326.4" font-size="8.6" fill="#595959" textLength="17.8" lengthAdjust="spacingAndGlyphs" >2015</text>
<rect x="500.5" y="337.85" width="4.6" height="4.6" fill="#70ad47"/>
<text x="507.2" y="343.15" font-size="8.6" fill="#595959" textLength="17.8" lengthAdjust="spacingAndGlyphs" >2016</text>
<rect x="643.5" y="216.5" width="400" height="216" fill="#fff" stroke="#d9d9d9" stroke-width="1"/>
<rect x="653.0" y="223.0" width="67.0" height="12.0" rx="2.5" fill="url(#pbg)" stroke="#c2c2c2" stroke-width="1"/>
<text x="655.7" y="232.3" font-size="8.8" fill="#404040" textLength="61.4" lengthAdjust="spacingAndGlyphs" >Sum of Revenue</text>
<rect x="776.15" y="237.65" width="157.2" height="26.7" fill="none" stroke="#e81c24" stroke-width="3.3"/>
<text x="787.7" y="258.3" font-size="14.2" fill="#595959" textLength="130.8" lengthAdjust="spacingAndGlyphs" >Yearly Sales by Country</text>
<line x1="712" y1="388.70" x2="954" y2="388.70" stroke="#d9d9d9" stroke-width="1"/>
<text x="703" y="391.5" font-size="8.3" fill="#595959" text-anchor="end" >0</text>
<line x1="712" y1="372.07" x2="954" y2="372.07" stroke="#d9d9d9" stroke-width="1"/>
<text x="703" y="374.87" font-size="8.3" fill="#595959" text-anchor="end" >1000000</text>
<line x1="712" y1="355.44" x2="954" y2="355.44" stroke="#d9d9d9" stroke-width="1"/>
<text x="703" y="358.24" font-size="8.3" fill="#595959" text-anchor="end" >2000000</text>
<line x1="712" y1="338.81" x2="954" y2="338.81" stroke="#d9d9d9" stroke-width="1"/>
<text x="703" y="341.61" font-size="8.3" fill="#595959" text-anchor="end" >3000000</text>
<line x1="712" y1="322.18" x2="954" y2="322.18" stroke="#d9d9d9" stroke-width="1"/>
<text x="703" y="324.98" font-size="8.3" fill="#595959" text-anchor="end" >4000000</text>
<line x1="712" y1="305.55" x2="954" y2="305.55" stroke="#d9d9d9" stroke-width="1"/>
<text x="703" y="308.35" font-size="8.3" fill="#595959" text-anchor="end" >5000000</text>
<line x1="712" y1="288.92" x2="954" y2="288.92" stroke="#d9d9d9" stroke-width="1"/>
<text x="703" y="291.71999999999997" font-size="8.3" fill="#595959" text-anchor="end" >6000000</text>
<line x1="712" y1="272.29" x2="954" y2="272.29" stroke="#d9d9d9" stroke-width="1"/>
<text x="703" y="275.09" font-size="8.3" fill="#595959" text-anchor="end" >7000000</text>
<text x="731.8" y="402.8" font-size="8.3" fill="#595959" text-anchor="middle" >2011</text>
<text x="772.28" y="402.8" font-size="8.3" fill="#595959" text-anchor="middle" >2012</text>
<text x="812.76" y="402.8" font-size="8.3" fill="#595959" text-anchor="middle" >2013</text>
<text x="853.24" y="402.8" font-size="8.3" fill="#595959" text-anchor="middle" >2014</text>
<text x="893.7199999999999" y="402.8" font-size="8.3" fill="#595959" text-anchor="middle" >2015</text>
<text x="934.1999999999999" y="402.8" font-size="8.3" fill="#595959" text-anchor="middle" >2016</text>
<text x="0" y="0" font-size="8.8" fill="#595959" text-anchor="middle" textLength="39" lengthAdjust="spacingAndGlyphs" transform="translate(666.5,330) rotate(-90)">Axis Title</text>
<polyline points="731.8,338.5 772.3,336.5 812.8,306.8 853.2,310.0 893.7,284.3 934.2,292.7" fill="none" stroke="#5b9bd5" stroke-width="2.2" stroke-linejoin="round" stroke-linecap="round"/>
<polyline points="731.8,346.8 772.3,346.8 812.8,320.7 853.2,342.5 893.7,293.9 934.2,329.8" fill="none" stroke="#ed7d31" stroke-width="2.2" stroke-linejoin="round" stroke-linecap="round"/>
<polyline points="731.8,373.0 772.3,373.0 812.8,357.8 853.2,355.9 893.7,347.4 934.2,345.1" fill="none" stroke="#a5a5a5" stroke-width="2.2" stroke-linejoin="round" stroke-linecap="round"/>
<polyline points="731.8,375.0 772.3,374.5 812.8,365.0 853.2,360.8 893.7,355.9 934.2,352.0" fill="none" stroke="#ffc000" stroke-width="2.2" stroke-linejoin="round" stroke-linecap="round"/>
<polyline points="731.8,372.6 772.3,372.6 812.8,365.5 853.2,365.5 893.7,357.8 934.2,358.9" fill="none" stroke="#4472c4" stroke-width="2.2" stroke-linejoin="round" stroke-linecap="round"/>
<polyline points="731.8,376.0 772.3,375.0 812.8,365.5 853.2,365.4 893.7,360.4 934.2,360.8" fill="none" stroke="#70ad47" stroke-width="2.2" stroke-linejoin="round" stroke-linecap="round"/>
<rect x="966.5" y="291.5" width="43" height="11.5" rx="2.5" fill="url(#pbg)" stroke="#c2c2c2" stroke-width="1"/>
<text x="969.5" y="300.3" font-size="8.8" fill="#404040" textLength="30" lengthAdjust="spacingAndGlyphs" >Country</text>
<rect x="966.5" y="305.5" width="43" height="11" rx="2.5" fill="url(#pbg)" stroke="#c2c2c2" stroke-width="1"/>
<text x="969.5" y="313.8" font-size="8.8" fill="#404040" textLength="20" lengthAdjust="spacingAndGlyphs" >State</text>
<line x1="969.5" y1="326.0" x2="989.7" y2="326.0" stroke="#5b9bd5" stroke-width="2.2"/>
<text x="990.5" y="329.0" font-size="8.6" fill="#595959" >Unit</text>
<line x1="969.5" y1="342.7" x2="989.7" y2="342.7" stroke="#ed7d31" stroke-width="2.2"/>
<text x="990.5" y="345.7" font-size="8.6" fill="#595959" >Aust</text>
<line x1="969.5" y1="359.4" x2="989.7" y2="359.4" stroke="#a5a5a5" stroke-width="2.2"/>
<text x="990.5" y="362.4" font-size="8.6" fill="#595959" >Unit</text>
<line x1="969.5" y1="376.1" x2="989.7" y2="376.1" stroke="#ffc000" stroke-width="2.2"/>
<text x="990.5" y="379.1" font-size="8.6" fill="#595959" >Gern</text>
<rect x="653.2" y="413.3" width="31.899999999999977" height="11.699999999999989" rx="2.5" fill="url(#pbg)" stroke="#c2c2c2" stroke-width="1"/>
<text x="655.8" y="422.3" font-size="8.8" fill="#404040" textLength="16.5" lengthAdjust="spacingAndGlyphs" >Year</text>
<path d="M676.8000000000001,417.65 h6 l-3,3.5 Z" fill="#333"/>
<rect x="490.5" y="455.5" width="321" height="60" fill="#fff" stroke="#d9d9d9" stroke-width="1"/>
<rect x="498.5" y="461.5" width="67" height="12.300000000000011" rx="2.5" fill="url(#pbg)" stroke="#c2c2c2" stroke-width="1"/>
<text x="501.2" y="471.1" font-size="8.8" fill="#404040" textLength="61.4" lengthAdjust="spacingAndGlyphs" >Sum of Revenue</text>
<rect x="618.85" y="475.95" width="137.2" height="23.099999999999977" fill="none" stroke="#e81c24" stroke-width="3.3"/>
<text x="632.5" y="496" font-size="14.2" fill="#595959" textLength="108.5" lengthAdjust="spacingAndGlyphs" >Sales by Frame Size</text>
<rect x="811.5" y="455.5" width="260" height="60" fill="#fff" stroke="#d9d9d9" stroke-width="1"/>
<rect x="819.7" y="461.9" width="67.19999999999993" height="12.0" rx="2.5" fill="url(#pbg)" stroke="#c2c2c2" stroke-width="1"/>
<text x="822.4" y="471.2" font-size="8.8" fill="#404040" textLength="61.4" lengthAdjust="spacingAndGlyphs" >Sum of Revenue</text>
<rect x="872.65" y="480.15" width="124.7" height="21.899999999999988" fill="none" stroke="#e81c24" stroke-width="3.3"/>
<text x="882" y="496" font-size="14.2" fill="#595959" textLength="109" lengthAdjust="spacingAndGlyphs" >Sales by Age Group</text></g>
<rect x="0" y="508" width="1023" height="20" fill="#f5f5f5" />
<line x1="0" y1="507.5" x2="1008" y2="507.5" stroke="#c6c6c6" stroke-width="1" />
<path d="M20,517.5 l3,-3 v6 Z" fill="#bbb"/><path d="M45,517.5 l-3,-3 v6 Z" fill="#bbb"/>
<line x1="75.5" y1="511" x2="75.5" y2="525" stroke="#c6c6c6" stroke-width="1" />
<text x="84.5" y="522" font-size="10" fill="#555" textLength="19.9" lengthAdjust="spacingAndGlyphs" >Data</text>
<line x1="114.5" y1="511" x2="114.5" y2="525" stroke="#c6c6c6" stroke-width="1" />
<text x="125.2" y="522" font-size="10" fill="#555" textLength="20.5" lengthAdjust="spacingAndGlyphs" >Pivot</text>
<line x1="152.5" y1="511" x2="152.5" y2="525" stroke="#c6c6c6" stroke-width="1" />
<path d="M156.5,508 V525 H224.6 V508" fill="#ffffff" stroke="#c6c6c6" stroke-width="1"/>
<line x1="157" y1="525" x2="224.6" y2="525" stroke="#217346" stroke-width="1.6" />
<text x="166.3" y="522" font-size="10" fill="#217346" font-weight="bold" textLength="49.2" lengthAdjust="spacingAndGlyphs" >Dashboard</text>
<circle cx="255" cy="517.5" r="5.5" fill="none" stroke="#217346" stroke-width="1.2"/><path d="M252,517.5 h6 M255,514.5 v6" stroke="#217346" stroke-width="1.2"/>
<circle cx="614" cy="514" r="0.7" fill="#888"/><circle cx="614" cy="517.5" r="0.7" fill="#888"/><circle cx="614" cy="521" r="0.7" fill="#888"/>
<rect x="626.5" y="512.5" width="11" height="11" fill="#fff" stroke="#c6c6c6" stroke-width="1" />
<path d="M633.5,515 l-3.5,3 l3.5,3 Z" fill="#555"/>
<rect x="637.5" y="512.5" width="339" height="11" fill="#fff" stroke="#c6c6c6" stroke-width="1" />
<rect x="977" y="513" width="19" height="10" fill="#e6e6e6" />
<rect x="996.5" y="512.5" width="11" height="11" fill="#fff" stroke="#c6c6c6" stroke-width="1" />
<path d="M1000.5,515 l3.5,3 l-3.5,3 Z" fill="#555"/>
<rect x="0" y="528" width="1023" height="17" fill="#217346" />
<text x="5.5" y="540" font-size="8.5" fill="#ffffff" textLength="24.5" lengthAdjust="spacingAndGlyphs" >READY</text>
<rect x="804" y="528" width="29" height="17" fill="#1a5c38" />
<g stroke="#fff" stroke-width="0.8" fill="none"><rect x="813.5" y="531.5" width="10" height="10"/><path d="M816.8,531.5 v10 M820.2,531.5 v10 M813.5,534.8 h10 M813.5,538.2 h10"/></g>
<g stroke="#fff" stroke-width="0.8" fill="none"><rect x="841.5" y="531.5" width="11" height="10"/><rect x="844.5" y="533.5" width="5" height="6"/></g>
<g stroke="#fff" stroke-width="0.8" fill="#fff"><rect x="870.5" y="531.5" width="10" height="10" fill="none"/><rect x="872" y="531.5" width="3" height="5"/><rect x="876" y="531.5" width="3" height="5"/></g>
<line x1="893" y1="536.5" x2="898" y2="536.5" stroke="#fff" stroke-width="1.5" />
<line x1="901" y1="536.5" x2="976" y2="536.5" stroke="#fff" stroke-width="1" />
<rect x="937" y="532" width="2.5" height="9" fill="#fff" />
<line x1="979" y1="536.5" x2="986" y2="536.5" stroke="#fff" stroke-width="1.5" />
<line x1="982.5" y1="533" x2="982.5" y2="540" stroke="#fff" stroke-width="1.5" />
<text x="996" y="540" font-size="9" fill="#ffffff" textLength="20" lengthAdjust="spacingAndGlyphs" >100%</text>
<rect x="251.5" y="531.5" width="43" height="12" fill="#ffffff" stroke="#767676" stroke-width="1" />
<text x="253.5" y="541" font-size="8.5" fill="#555" stroke="#555" stroke-width="0.08" textLength="39" lengthAdjust="spacingAndGlyphs" >New sheet</text>
<rect x="151.2" y="504.3" width="80" height="25.2" fill="none" stroke="#e81c24" stroke-width="3.2" />
<rect x="239.6" y="506.1" width="31.5" height="23.4" fill="none" stroke="#e81c24" stroke-width="3.2" />
<text x="150.6" y="492.3" font-size="14.5" fill="#e81c24" stroke="#e81c24" stroke-width="0.08" font-weight="bold" textLength="10.3" lengthAdjust="spacingAndGlyphs" >2</text>
<text x="277.2" y="506.8" font-size="14.5" fill="#e81c24" stroke="#e81c24" stroke-width="0.08" font-weight="bold" textLength="7.5" lengthAdjust="spacingAndGlyphs" >1</text>
<defs><linearGradient id="tb" x1="0" x2="1" y1="0" y2="0"><stop offset="0" stop-color="#31323f"/><stop offset="0.1" stop-color="#402e3f"/><stop offset="0.38" stop-color="#4e2f3d"/><stop offset="0.5" stop-color="#50323c"/><stop offset="0.6" stop-color="#4c383e"/><stop offset="0.74" stop-color="#4c3d41"/><stop offset="1" stop-color="#4a3f41"/></linearGradient></defs>
<rect x="0" y="545" width="1023" height="30" fill="url(#tb)" />
<path d="M12,555 l5,-0.8 v5 h-5 Z M18,554 l6.5,-1 v6 h-6.5 Z M12,560.3 h5 v5 l-5,-0.8 Z M18,560.3 h6.5 v6 l-6.5,-1 Z" fill="#fff"/>
<circle cx="56" cy="557.5" r="4.5" fill="none" stroke="#fff" stroke-width="1.3"/><path d="M52.7,561 l-4.5,4.5" stroke="#fff" stroke-width="1.5"/>
<circle cx="89.5" cy="560" r="5.5" fill="none" stroke="#fff" stroke-width="1.4"/>
<g fill="none" stroke="#fff" stroke-width="1.1"><path d="M119.3,555 h9.5 M119.3,565 h9.5 M121,557 v6 M127.2,557 v6 M121,560 h6.2"/><path d="M131.3,558 v7.5"/></g><circle cx="131.3" cy="556" r="1" fill="#fff"/>
<path d="M156,552.5 h6 l2,2 h8.5 v12 h-16.5 Z" fill="#e8b53c"/><rect x="156" y="556.5" width="16.5" height="9" fill="#f8d775"/><path d="M159.5,566.5 v-4 h9.5 v4 h-2 v-2 h-5.5 v2 Z" fill="#3c8ad8"/>
<rect x="149.6" y="573" width="29.3" height="2" fill="#90cff5" />
<circle cx="200.5" cy="560" r="7.5" fill="#1ed760"/><path d="M196,557.5 q5,-1.5 9,1 M196.5,560 q4,-1 7.5,1 M197,562.5 q3,-0.8 6,0.8" fill="none" stroke="#222" stroke-width="1.2"/>
<rect x="186" y="573" width="29.6" height="2" fill="#90cff5" />
<circle cx="237" cy="559.5" r="7" fill="#fff"/><path d="M231,566.5 l1.5,-4 l3,2 Z" fill="#fff"/><circle cx="237" cy="559.5" r="5.5" fill="#25d366"/><path d="M234.5,557 q0,4 5,5 l1,-1 l-1.5,-1 l-1,0.8 q-2,-1 -2.5,-2.5 l0.8,-1 l-1,-1.5 Z" fill="#fff"/>
<rect x="266" y="552" width="16" height="15" fill="#0b3a7a"/><rect x="267" y="553" width="14" height="13" fill="#1a4f9c"/><text x="268.5" y="563" font-size="7.5" fill="#8ecbff" font-weight="bold">Ps</text>
<circle cx="311" cy="560" r="7.5" fill="#db4437"/><path d="M311,560 L304.5,563.75 A7.5,7.5 0 0 0 314.75,566.5 Z" fill="#0f9d58"/><path d="M311,560 L314.75,566.5 A7.5,7.5 0 0 0 317.5,556.25 L311,552.5 Z" fill="#f4b400"/><circle cx="311" cy="560" r="3.3" fill="#fff"/><circle cx="311" cy="560" r="2.5" fill="#4285f4"/>
<rect x="296" y="573" width="29.6" height="2" fill="#90cff5" />
<rect x="329.4" y="545" width="36.3" height="30" fill="#6b5b69" />
<g transform="translate(338.8,551.8)"><rect x="9" y="1.5" width="8" height="13" fill="#e8f3ec" stroke="#1e7145" stroke-width="1.2"/><path d="M9.5,4.8 h7 M9.5,8 h7 M9.5,11.2 h7" stroke="#1e7145" stroke-width="1"/><path d="M0,1.5 L10,0 L10,16.2 L0,14.7 Z" fill="#1e7145"/><path d="M2.6,5 L7.2,11.4 M7.2,5 L2.6,11.4" stroke="#fff" stroke-width="1.8"/></g>
<rect x="329.4" y="573" width="36.3" height="2" fill="#90cff5" />
<path d="M823,562 l4,-4 l4,4" fill="none" stroke="#fff" stroke-width="1.2"/>
<rect x="840.5" y="555.5" width="10" height="9" fill="none" stroke="#ddd"/><rect x="842" y="560" width="7" height="3" fill="#999"/>
<rect x="857.5" y="557.5" width="11" height="6" fill="none" stroke="#fff"/><rect x="859" y="559" width="7" height="3" fill="#fff"/><rect x="869" y="559" width="1.5" height="3" fill="#fff"/>
<path d="M877,565 a9,9 0 0 1 9,-9 M879.5,565 a6.5,6.5 0 0 1 6.5,-6.5 M882,565 a4,4 0 0 1 4,-4" fill="none" stroke="#ccc" stroke-width="1"/>
<path d="M892,558 h2.5 l3.5,-3 v11 l-3.5,-3 h-2.5 Z" fill="none" stroke="#ddd" stroke-width="1"/><path d="M900,558.5 l4,4 M904,558.5 l-4,4" stroke="#ddd" stroke-width="1"/>
<text x="913" y="562.9" font-size="8.3" fill="#ffffff" textLength="15.8" lengthAdjust="spacingAndGlyphs" >ENG</text>
<text x="943.4" y="556" font-size="8.8" fill="#ffffff" textLength="31" lengthAdjust="spacingAndGlyphs" >7:23 PM</text>
<text x="938" y="569.5" font-size="8.8" fill="#ffffff" textLength="41.5" lengthAdjust="spacingAndGlyphs" >07-Mar-20</text>
<path d="M992.3,554.3 h12.2 v9.5 h-6 l-3,2.5 v-2.5 h-3.2 Z" fill="#f4f4f4"/><path d="M994.5,556.5 h8 M994.5,559 h8" stroke="#999" stroke-width="0.8"/>
<circle cx="1003.8" cy="565.2" r="6" fill="#2a2030" stroke="#aaa" stroke-width="0.9"/><text x="999.6" y="568.3" font-size="8" fill="#fff" font-weight="bold" textLength="8.4" lengthAdjust="spacingAndGlyphs">13</text>
<line x1="1019.5" y1="545" x2="1019.5" y2="575" stroke="#8a8080" stroke-width="1" />
</svg></body></html>
